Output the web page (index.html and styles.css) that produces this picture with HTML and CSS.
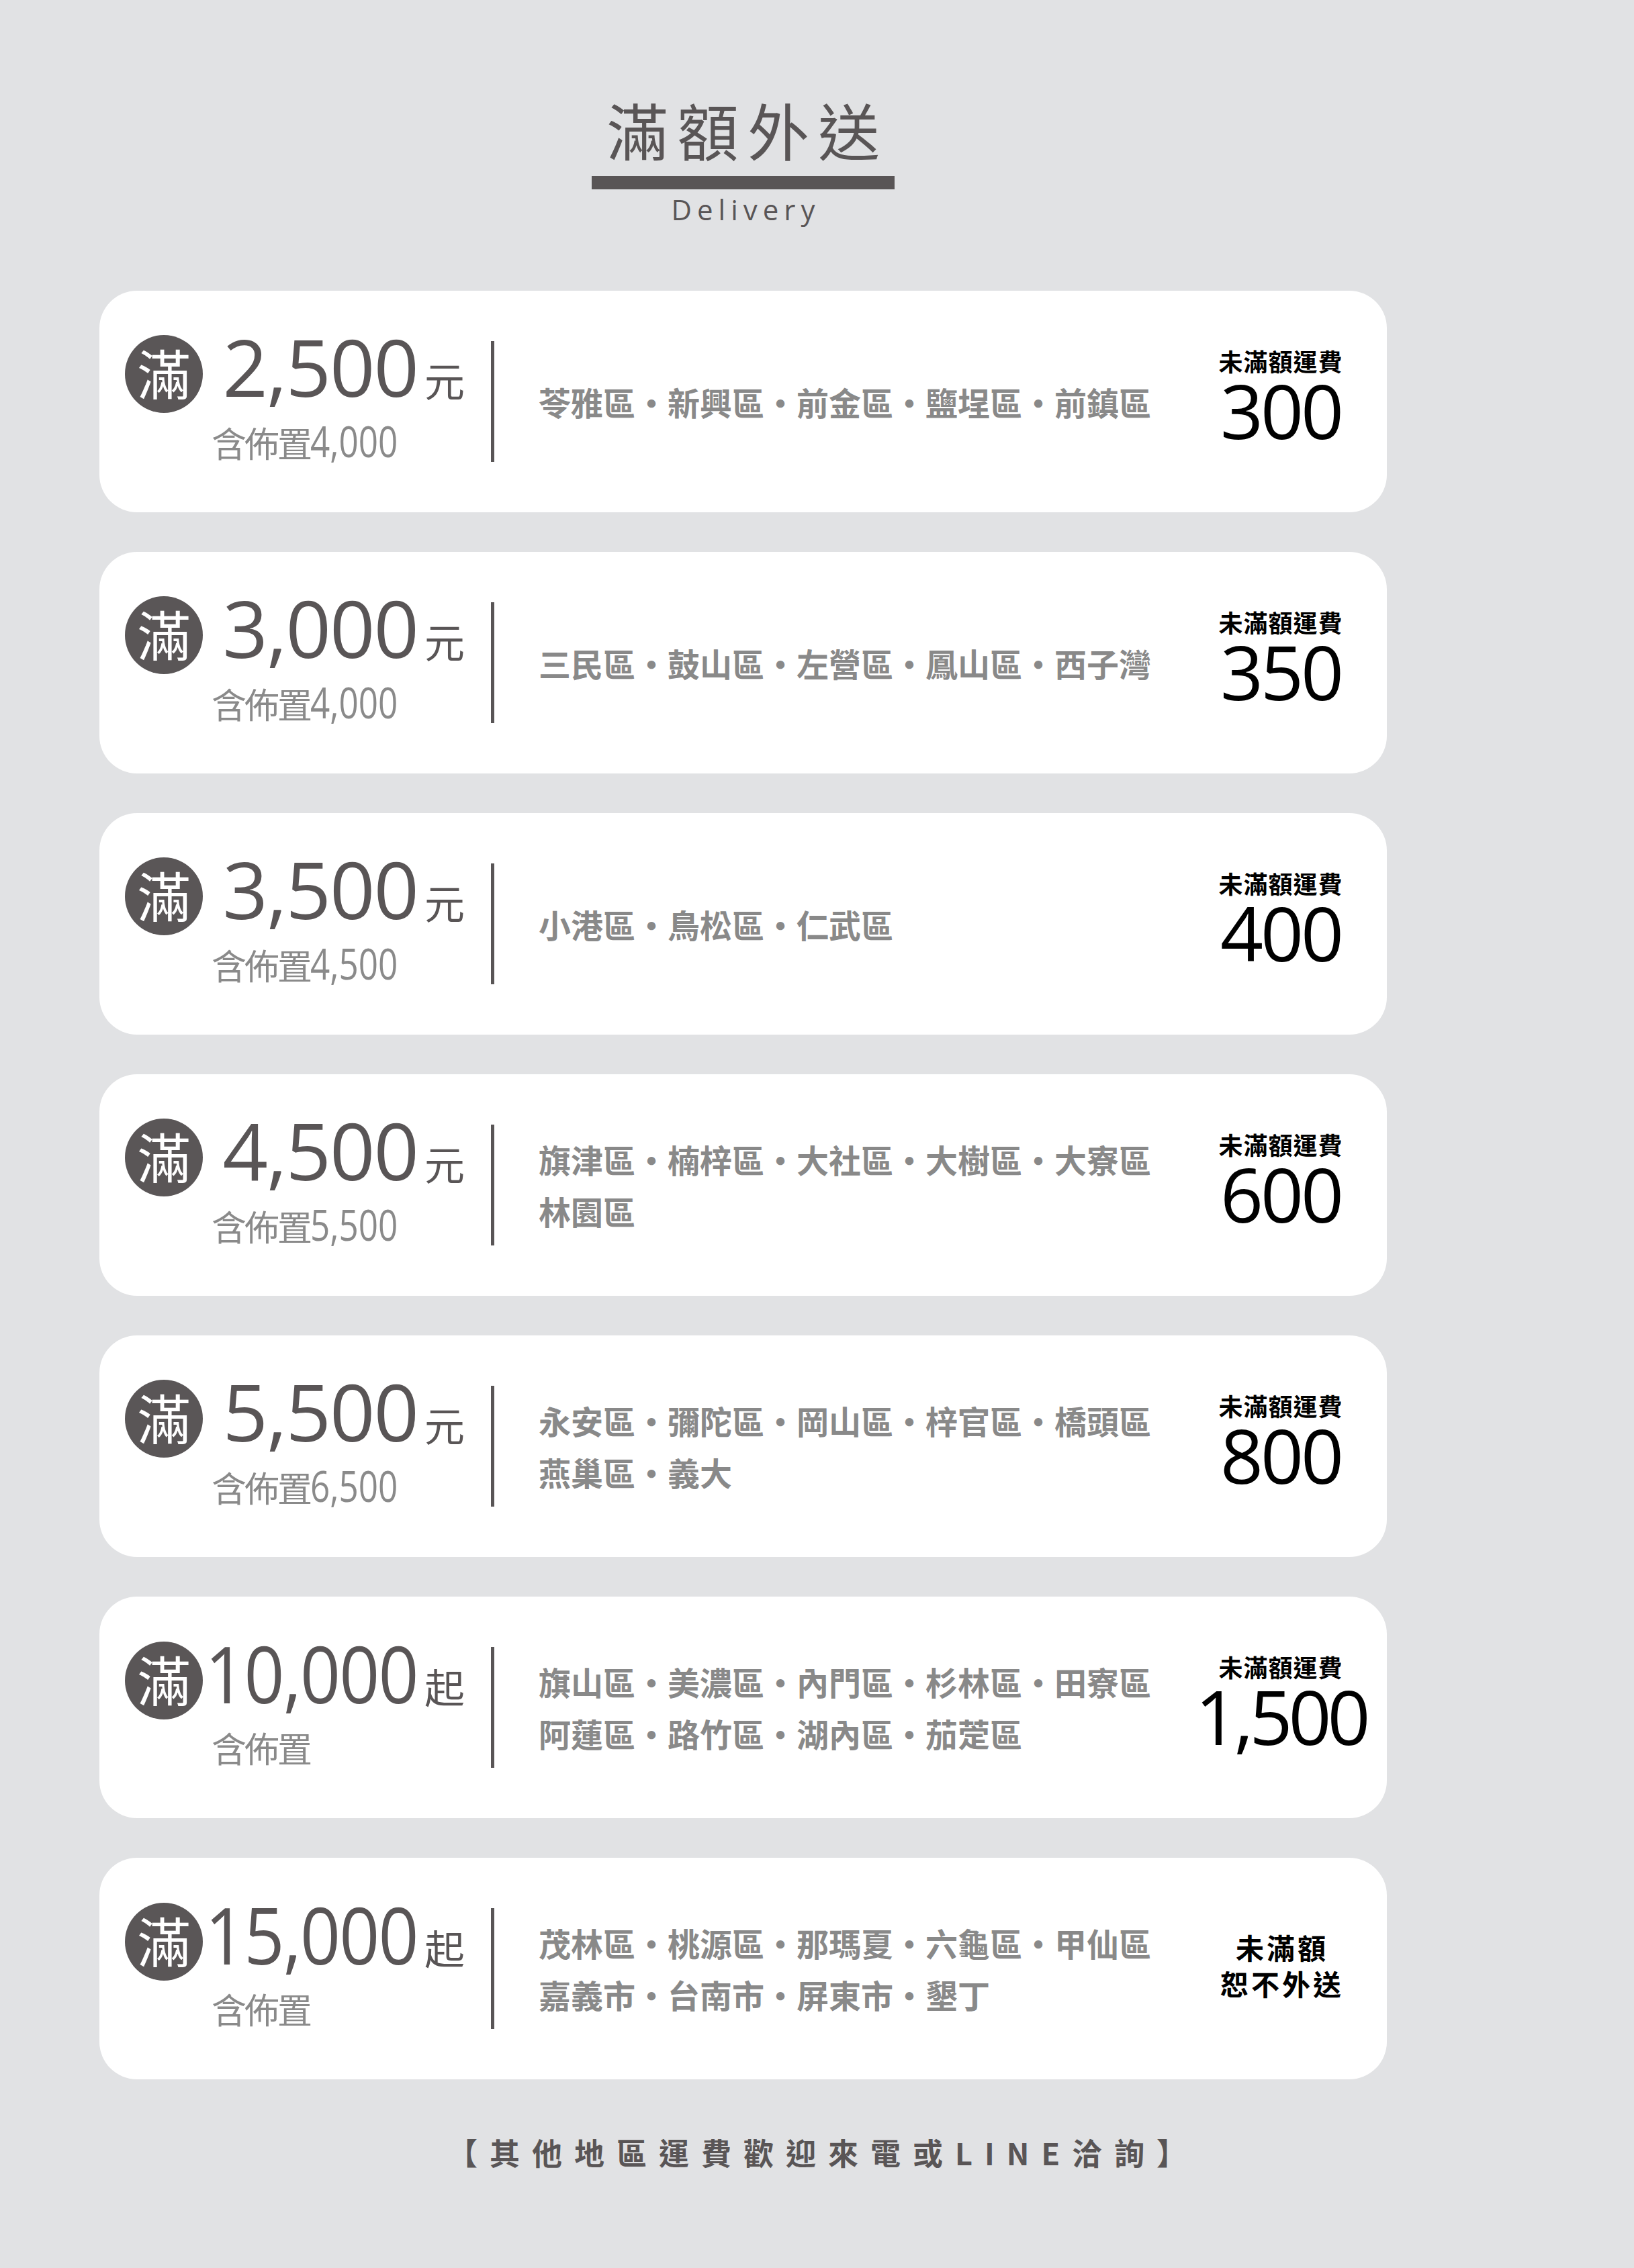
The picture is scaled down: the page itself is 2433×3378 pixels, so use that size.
FILE: index.html
```html
<!DOCTYPE html>
<html lang="zh-Hant">
<head>
<meta charset="utf-8">
<title>滿額外送 Delivery</title>
<link rel="stylesheet" href="styles.css">
</head>
<body>
<main class="sheet">
  <div class="column">
    <header class="head">
      <h1 class="title">滿額外送</h1>
      <div class="bar"></div>
      <div class="title-en">Delivery</div>
    </header>

    <section class="cards">
      <div class="card">
        <div class="left">
          <div class="amount-row">
            <div class="badge">滿</div>
            <div class="amount"><span class="num">2,500</span><span class="unit">元</span></div>
          </div>
          <div class="incl">含佈置<span class="incl-num">4,000</span></div>
        </div>
        <div class="divider"></div>
        <div class="areas"><p>苓雅區・新興區・前金區・鹽埕區・前鎮區</p></div>
        <div class="fee"><div class="fee-label">未滿額運費</div><div class="fee-num">300</div></div>
      </div>

      <div class="card">
        <div class="left">
          <div class="amount-row">
            <div class="badge">滿</div>
            <div class="amount"><span class="num">3,000</span><span class="unit">元</span></div>
          </div>
          <div class="incl">含佈置<span class="incl-num">4,000</span></div>
        </div>
        <div class="divider"></div>
        <div class="areas"><p>三民區・鼓山區・左營區・鳳山區・西子灣</p></div>
        <div class="fee"><div class="fee-label">未滿額運費</div><div class="fee-num">350</div></div>
      </div>

      <div class="card">
        <div class="left">
          <div class="amount-row">
            <div class="badge">滿</div>
            <div class="amount"><span class="num">3,500</span><span class="unit">元</span></div>
          </div>
          <div class="incl">含佈置<span class="incl-num">4,500</span></div>
        </div>
        <div class="divider"></div>
        <div class="areas"><p>小港區・鳥松區・仁武區</p></div>
        <div class="fee"><div class="fee-label">未滿額運費</div><div class="fee-num">400</div></div>
      </div>

      <div class="card">
        <div class="left">
          <div class="amount-row">
            <div class="badge">滿</div>
            <div class="amount"><span class="num">4,500</span><span class="unit">元</span></div>
          </div>
          <div class="incl">含佈置<span class="incl-num">5,500</span></div>
        </div>
        <div class="divider"></div>
        <div class="areas"><p>旗津區・楠梓區・大社區・大樹區・大寮區</p><p>林園區</p></div>
        <div class="fee"><div class="fee-label">未滿額運費</div><div class="fee-num">600</div></div>
      </div>

      <div class="card">
        <div class="left">
          <div class="amount-row">
            <div class="badge">滿</div>
            <div class="amount"><span class="num">5,500</span><span class="unit">元</span></div>
          </div>
          <div class="incl">含佈置<span class="incl-num">6,500</span></div>
        </div>
        <div class="divider"></div>
        <div class="areas"><p>永安區・彌陀區・岡山區・梓官區・橋頭區</p><p>燕巢區・義大</p></div>
        <div class="fee"><div class="fee-label">未滿額運費</div><div class="fee-num">800</div></div>
      </div>

      <div class="card">
        <div class="left">
          <div class="amount-row">
            <div class="badge">滿</div>
            <div class="amount"><span class="num num-narrow">10,000</span><span class="unit">起</span></div>
          </div>
          <div class="incl">含佈置</div>
        </div>
        <div class="divider"></div>
        <div class="areas"><p>旗山區・美濃區・內門區・杉林區・田寮區</p><p>阿蓮區・路竹區・湖內區・茄萣區</p></div>
        <div class="fee"><div class="fee-label">未滿額運費</div><div class="fee-num fee-num-wide">1,500</div></div>
      </div>

      <div class="card">
        <div class="left">
          <div class="amount-row">
            <div class="badge">滿</div>
            <div class="amount"><span class="num num-narrow">15,000</span><span class="unit">起</span></div>
          </div>
          <div class="incl">含佈置</div>
        </div>
        <div class="divider"></div>
        <div class="areas"><p>茂林區・桃源區・那瑪夏・六龜區・甲仙區</p><p>嘉義市・台南市・屏東市・墾丁</p></div>
        <div class="fee"><div class="fee-text">未滿額<br>恕不外送</div></div>
      </div>
    </section>
  </div>

  <p class="note">【其他地區運費歡迎來電或LINE洽詢】</p>
</main>
</body>
</html>
```

FILE: styles.css
```css
html, body {
  margin: 0;
  padding: 0;
}

body {
  background: #e1e2e4;
  font-family: "Noto Sans CJK TC", "Noto Sans", sans-serif;
  color: #595556;
}

.sheet {
  width: 2433px;
  min-height: 3378px;
  padding-top: 146px;
  box-sizing: border-box;
}

.column {
  width: 1917px;
  margin-left: 148px;
}

/* ---------- header ---------- */
.head {
  display: flex;
  flex-direction: column;
  align-items: center;
}

.title {
  margin: 0;
  font-size: 92px;
  font-weight: 400;
  line-height: 1;
  letter-spacing: 13px;
  padding-left: 13px;
  color: #595556;
}

.bar {
  width: 451px;
  height: 20px;
  margin-top: 24px;
  background: #595556;
}

.title-en {
  margin-top: 9px;
  font-family: "Open Sans", "Noto Sans", sans-serif;
  font-size: 42px;
  line-height: 1;
  letter-spacing: 8px;
  padding-left: 8px;
  color: #595556;
}

/* ---------- cards ---------- */
.cards {
  margin-top: 100px;
  display: flex;
  flex-direction: column;
  gap: 59px;
}

.card {
  height: 330px;
  box-sizing: border-box;
  padding-left: 38px;
  background: #ffffff;
  border-radius: 56px;
  display: flex;
  align-items: center;
}

.left {
  width: 506px;
  flex: none;
  padding-bottom: 12px;
  display: flex;
  flex-direction: column;
}

.amount-row {
  display: flex;
  justify-content: space-between;
  align-items: flex-start;
}

.badge {
  width: 116px;
  height: 116px;
  flex: none;
  border-radius: 50%;
  background: #5a5657;
  color: #ffffff;
  font-size: 80px;
  line-height: 108px;
  text-align: center;
}

.amount {
  display: flex;
  align-items: baseline;
  margin-top: -12px;
  color: #595556;
}

.num {
  font-family: "Open Sans", "Noto Sans", sans-serif;
  font-size: 118px;
  line-height: 1;
  letter-spacing: -2px;
}

.num-narrow {
  margin-left: -40px;
  transform: scaleX(0.89);
  transform-origin: right center;
}

.unit {
  font-size: 60px;
  line-height: 1;
  margin-left: 10px;
}

.incl {
  margin-top: 16px;
  margin-left: 129px;
  font-size: 52px;
  line-height: 1;
  letter-spacing: -3px;
  color: #8a8a8a;
}

.incl-num {
  display: inline-block;
  font-family: "Open Sans", "Noto Sans", sans-serif;
  font-size: 64px;
  line-height: 52px;
  letter-spacing: 0;
  transform: scaleX(0.8);
  transform-origin: left center;
}

.divider {
  width: 5px;
  height: 180px;
  flex: none;
  margin-left: 39px;
  background: #595556;
}

.areas {
  flex: 1;
  margin-left: 66px;
  font-size: 48px;
  font-weight: 700;
  line-height: 77px;
  color: #898989;
}

.areas p {
  margin: 0;
}

.fee {
  width: 316px;
  flex: none;
  padding-bottom: 10px;
  text-align: center;
  color: #000000;
}

.fee-label {
  font-size: 36px;
  font-weight: 700;
  line-height: 1;
  letter-spacing: 1px;
}

.fee-num {
  font-family: "Open Sans", "Noto Sans", sans-serif;
  font-size: 112px;
  line-height: 1;
  letter-spacing: -4px;
}

.fee-num-wide {
  letter-spacing: -6px;
}

.fee-text {
  font-size: 42px;
  font-weight: 700;
  line-height: 54px;
  letter-spacing: 4px;
  padding-left: 4px;
}

/* ---------- footer note ---------- */
.note {
  margin: 86px 0 0;
  text-align: center;
  padding-left: 18px;
  font-size: 45px;
  font-weight: 700;
  line-height: 1;
  letter-spacing: 18px;
  color: #595556;
}
```
